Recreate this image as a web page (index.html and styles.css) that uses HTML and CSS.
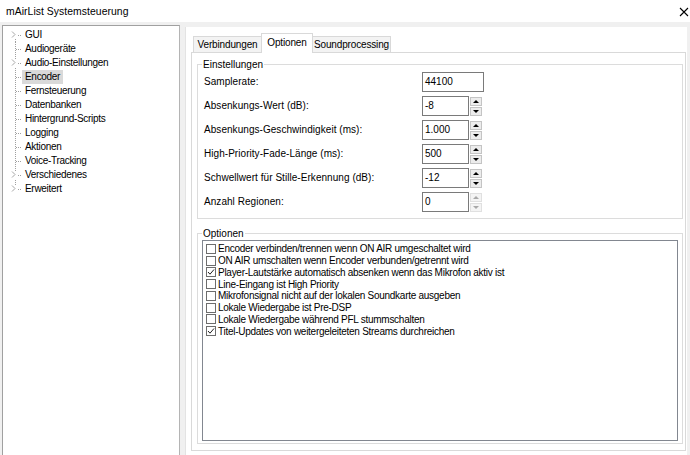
FILE: index.html
```html
<!DOCTYPE html>
<html lang="de">
<head>
<meta charset="utf-8">
<title>mAirList Systemsteuerung</title>
<link rel="stylesheet" href="styles.css">
</head>
<body>
<div class="titlebar">
  <span class="title">mAirList Systemsteuerung</span>
  <svg class="close" width="10" height="10" viewBox="0 0 10 10"><path d="M1 1 L9 9 M9 1 L1 9" stroke="#000" stroke-width="1.1" fill="none"/></svg>
</div>
<div class="main">
  <div class="tree">
    <div class="node first"><span class="gutter"><svg class="arrow" viewBox="0 0 8 8"><path d="M2.5 0.5 L5.5 3.5 L2.5 6.5" stroke="#a6a6a6" stroke-width="1" fill="none"/></svg></span><span class="label">GUI</span></div>
    <div class="node"><span class="gutter"></span><span class="label">Audiogeräte</span></div>
    <div class="node"><span class="gutter"><svg class="arrow" viewBox="0 0 8 8"><path d="M2.5 0.5 L5.5 3.5 L2.5 6.5" stroke="#a6a6a6" stroke-width="1" fill="none"/></svg></span><span class="label">Audio-Einstellungen</span></div>
    <div class="node"><span class="gutter"></span><span class="label selected">Encoder</span></div>
    <div class="node"><span class="gutter"></span><span class="label">Fernsteuerung</span></div>
    <div class="node"><span class="gutter"></span><span class="label">Datenbanken</span></div>
    <div class="node"><span class="gutter"></span><span class="label">Hintergrund-Scripts</span></div>
    <div class="node"><span class="gutter"></span><span class="label">Logging</span></div>
    <div class="node"><span class="gutter"></span><span class="label">Aktionen</span></div>
    <div class="node"><span class="gutter"></span><span class="label">Voice-Tracking</span></div>
    <div class="node"><span class="gutter"><svg class="arrow" viewBox="0 0 8 8"><path d="M2.5 0.5 L5.5 3.5 L2.5 6.5" stroke="#a6a6a6" stroke-width="1" fill="none"/></svg></span><span class="label">Verschiedenes</span></div>
    <div class="node last"><span class="gutter"><svg class="arrow" viewBox="0 0 8 8"><path d="M2.5 0.5 L5.5 3.5 L2.5 6.5" stroke="#a6a6a6" stroke-width="1" fill="none"/></svg></span><span class="label">Erweitert</span></div>
  </div>
  <div class="splitter"></div>
  <div class="panel">
    <div class="tabs">
      <div class="tab tab-a">Verbindungen</div>
      <div class="tab tab-b active">Optionen</div>
      <div class="tab tab-c">Soundprocessing</div>
    </div>
    <div class="page">
      <fieldset class="group settings">
        <legend>Einstellungen</legend>
        <div class="rows">
          <span class="lbl">Samplerate:</span>
          <div class="field"><span class="input wide">44100</span></div>
          <span class="lbl">Absenkungs-Wert (dB):</span>
          <div class="field"><span class="input">-8</span><span class="spin"><span class="btn"><i class="up"></i></span><span class="btn"><i class="down"></i></span></span></div>
          <span class="lbl">Absenkungs-Geschwindigkeit (ms):</span>
          <div class="field"><span class="input">1.000</span><span class="spin"><span class="btn"><i class="up"></i></span><span class="btn"><i class="down"></i></span></span></div>
          <span class="lbl">High-Priority-Fade-Länge (ms):</span>
          <div class="field"><span class="input">500</span><span class="spin"><span class="btn"><i class="up"></i></span><span class="btn"><i class="down"></i></span></span></div>
          <span class="lbl">Schwellwert für Stille-Erkennung (dB):</span>
          <div class="field"><span class="input">-12</span><span class="spin"><span class="btn"><i class="up"></i></span><span class="btn"><i class="down"></i></span></span></div>
          <span class="lbl">Anzahl Regionen:</span>
          <div class="field"><span class="input">0</span><span class="spin disabled"><span class="btn"><i class="up"></i></span><span class="btn"><i class="down"></i></span></span></div>
        </div>
      </fieldset>
      <fieldset class="group options">
        <legend>Optionen</legend>
        <div class="checklist">
          <div class="item"><span class="box"></span>Encoder verbinden/trennen wenn ON AIR umgeschaltet wird</div>
          <div class="item"><span class="box"></span>ON AIR umschalten wenn Encoder verbunden/getrennt wird</div>
          <div class="item"><span class="box"><svg viewBox="0 0 8 8"><path d="M1 4 L3 6.2 L7 1.5" stroke="#222" stroke-width="1" fill="none"/></svg></span>Player-Lautstärke automatisch absenken wenn das Mikrofon aktiv ist</div>
          <div class="item"><span class="box"></span>Line-Eingang ist High Priority</div>
          <div class="item"><span class="box"></span>Mikrofonsignal nicht auf der lokalen Soundkarte ausgeben</div>
          <div class="item"><span class="box"></span>Lokale Wiedergabe ist Pre-DSP</div>
          <div class="item"><span class="box"></span>Lokale Wiedergabe während PFL stummschalten</div>
          <div class="item"><span class="box"><svg viewBox="0 0 8 8"><path d="M1 4 L3 6.2 L7 1.5" stroke="#222" stroke-width="1" fill="none"/></svg></span>Titel-Updates von weitergeleiteten Streams durchreichen</div>
        </div>
      </fieldset>
    </div>
  </div>
</div>
</body>
</html>
```
FILE: styles.css
```css
* { box-sizing: border-box; }
html, body { margin: 0; padding: 0; }
body {
  width: 690px;
  height: 455px;
  overflow: hidden;
  background: #f0f0f0;
  font-family: "Liberation Sans", Arial, sans-serif;
  font-size: 10px;
  color: #000;
}
.titlebar {
  height: 22px;
  background: #fff;
  display: flex;
  align-items: center;
  justify-content: space-between;
  padding: 1px 1px 0 6px;
}
.title { font-size: 10.4px; letter-spacing: 0.05px; }
.close { width: 10px; height: 10px; margin-top: 1px; }

.main { display: flex; height: 433px; padding-top: 3px; }

.tree {
  width: 178px;
  margin-left: 2px;
  height: 440px;
  flex: none;
  background: #fff;
  border: 1px solid #a0a0a0;
  border-right-color: #b4b4b4;
  padding-top: 2px;
  letter-spacing: -0.3px;
}
.node { display: flex; height: 14px; align-items: center; }
.gutter { position: relative; width: 19px; height: 14px; flex: none; }
.gutter::before {
  content: "";
  position: absolute;
  left: 12px; top: 0; bottom: 0; width: 1px;
  background: repeating-linear-gradient(to bottom, #a0a0a0 0 1px, transparent 1px 2px);
}
.first .gutter::before { top: 7px; }
.last .gutter::before { bottom: 7px; }
.gutter::after {
  content: "";
  position: absolute;
  left: 13px; top: 7px; width: 6px; height: 1px;
  background: repeating-linear-gradient(to right, #a0a0a0 0 1px, transparent 1px 2px);
}
.arrow {
  position: absolute;
  left: 6px; top: 3px;
  width: 9px; height: 8px;
  background: #fff;
  z-index: 1;
}
.label { padding: 0 3px; line-height: 14px; height: 14px; white-space: nowrap; }
.label.selected { background: #d9d9d9; }

.splitter { width: 5px; flex: none; }

.panel {
  width: 502px;
  flex: none;
  margin-top: 2px;
  background: #fff;
  border-left: 1px solid #e3e3e3;
  padding: 6px 1px 0 5px;
}
.tabs {
  display: flex;
  align-items: flex-end;
  height: 19px;
  padding-left: 2px;
}
.tab {
  height: 16px;
  border: 1px solid #d9d9d9;
  border-bottom: none;
  background: #f3f3f3;
  display: flex;
  align-items: center;
  justify-content: center;
  white-space: nowrap;
  letter-spacing: -0.15px;
}
.tab-a { width: 68px; border-right: none; }
.tab-b { width: 52px; }
.tab-c { width: 78px; border-left: none; }
.tab.active {
  height: 20px;
  margin-bottom: -1px;
  background: #fff;
  position: relative;
  z-index: 1;
  padding-bottom: 2px;
}
.page {
  height: 399px;
  border: 1px solid #d9d9d9;
  background: #fff;
  padding: 5px 2px 0 5px;
}

.group {
  margin: 0;
  border: 1px solid #dcdcdc;
  min-width: 0;
}
.group legend {
  padding: 0 1px;
  line-height: 13px;
  height: 13px;
}
.settings { padding: 1px 4px 6px 6px; }
.settings legend { margin-left: -2px; }
.rows {
  display: grid;
  grid-template-columns: 218px auto;
  row-gap: 4px;
  align-items: center;
}
.lbl { line-height: 20px; white-space: nowrap; letter-spacing: 0.05px; }
.field { display: flex; align-items: center; gap: 1px; height: 20px; }
.input {
  width: 47px;
  height: 20px;
  border: 1px solid #7a7a7a;
  background: #fff;
  padding-left: 2px;
  line-height: 18px;
}
.input.wide { width: 62px; }
.spin {
  display: flex;
  flex-direction: column;
  gap: 1px;
  width: 12px;
  height: 19px;
}
.btn {
  flex: 1;
  border: 1px solid #c4c4c4;
  background: #ececec;
  display: flex;
  align-items: center;
  justify-content: center;
}
.btn i { width: 0; height: 0; border-left: 3px solid transparent; border-right: 3px solid transparent; }
.btn i.up { border-bottom: 3px solid #000; }
.btn i.down { border-top: 3px solid #000; }
.spin.disabled .btn { border-color: #e0e0e0; background: #f4f4f4; }
.spin.disabled .btn i.up { border-bottom-color: #a8a8a8; }
.spin.disabled .btn i.down { border-top-color: #a8a8a8; }

.options { margin-top: 8px; padding: 0 4px 2px 4px; }
.checklist {
  height: 201px;
  border: 1px solid #828790;
  padding: 2px 0 0 3px;
  letter-spacing: -0.27px;
}
.item {
  display: flex;
  align-items: center;
  height: 11.75px;
  gap: 2px;
  white-space: nowrap;
}
.box {
  width: 10px;
  height: 10px;
  border: 1px solid #6d6d6d;
  background: #fff;
  flex: none;
  display: flex;
}
.box svg { width: 8px; height: 8px; }
```
